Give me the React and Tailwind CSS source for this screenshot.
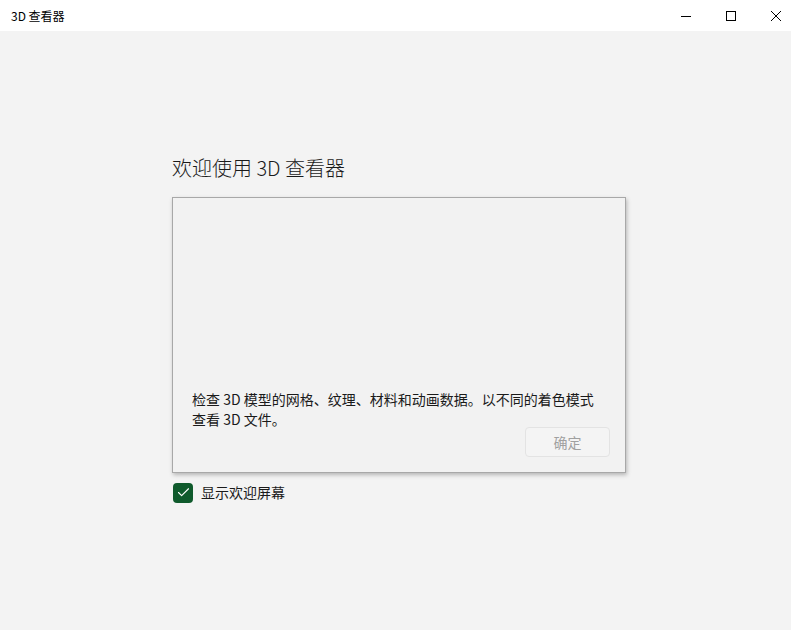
import { Check } from 'lucide-react';

const font = { fontFamily: '"Segoe UI", "Noto Sans CJK SC", "Noto Sans", sans-serif' };

export default function App() {
  return (
    <div className="w-[791px] h-[630px] bg-[#f3f3f3] flex flex-col text-black" style={font}>
      {/* 标题栏 */}
      <div className="h-[31px] bg-white flex items-center justify-between shrink-0">
        <span className="pl-[11px] text-[12px]">3D 查看器</span>
        <div className="flex items-center gap-[31px] pr-[8px]">
          <svg width="14" height="14" viewBox="0 0 14 14">
            <path d="M2 7.5h10" stroke="#000" strokeWidth="1" />
          </svg>
          <svg width="14" height="14" viewBox="0 0 14 14">
            <rect x="2.5" y="2.5" width="9" height="9" fill="none" stroke="#000" strokeWidth="1" />
          </svg>
          <svg width="14" height="14" viewBox="0 0 14 14">
            <path d="M2 2l10 10M12 2L2 12" stroke="#000" strokeWidth="1" />
          </svg>
        </div>
      </div>

      {/* 欢迎页 */}
      <div className="pl-[172px] pt-[124px]">
        <h1 className="text-[20px] leading-[26px] font-light text-[#1a1a1a]">欢迎使用 3D 查看器</h1>

        <div className="mt-[16px] w-[454px] h-[276px] bg-[#f2f2f2] border border-[#a8a8a8] shadow-[1px_2px_4px_rgba(0,0,0,0.25)] flex flex-col justify-end pl-[19px] pr-[15px] pb-[15px]">
          <p className="text-[14px] leading-[20px] text-[#1a1a1a] pr-[4px]">
            检查 3D 模型的网格、纹理、材料和动画数据。以不同的着色模式查看 3D 文件。
          </p>
          <div className="flex justify-end -mt-[2px]">
            <button className="w-[85px] h-[30px] rounded-[4px] border border-[#e3e3e3] bg-[#f4f4f4] text-[14px] text-[#a0a0a0]">
              确定
            </button>
          </div>
        </div>

        <label className="mt-[9px] ml-[1px] flex items-center gap-[8px]">
          <span className="w-[20px] h-[20px] rounded-[4px] bg-[#0f5a2c] flex items-center justify-center">
            <Check size={15} strokeWidth={1.8} color="white" />
          </span>
          <span className="text-[14px] text-[#1a1a1a]">显示欢迎屏幕</span>
        </label>
      </div>
    </div>
  );
}
